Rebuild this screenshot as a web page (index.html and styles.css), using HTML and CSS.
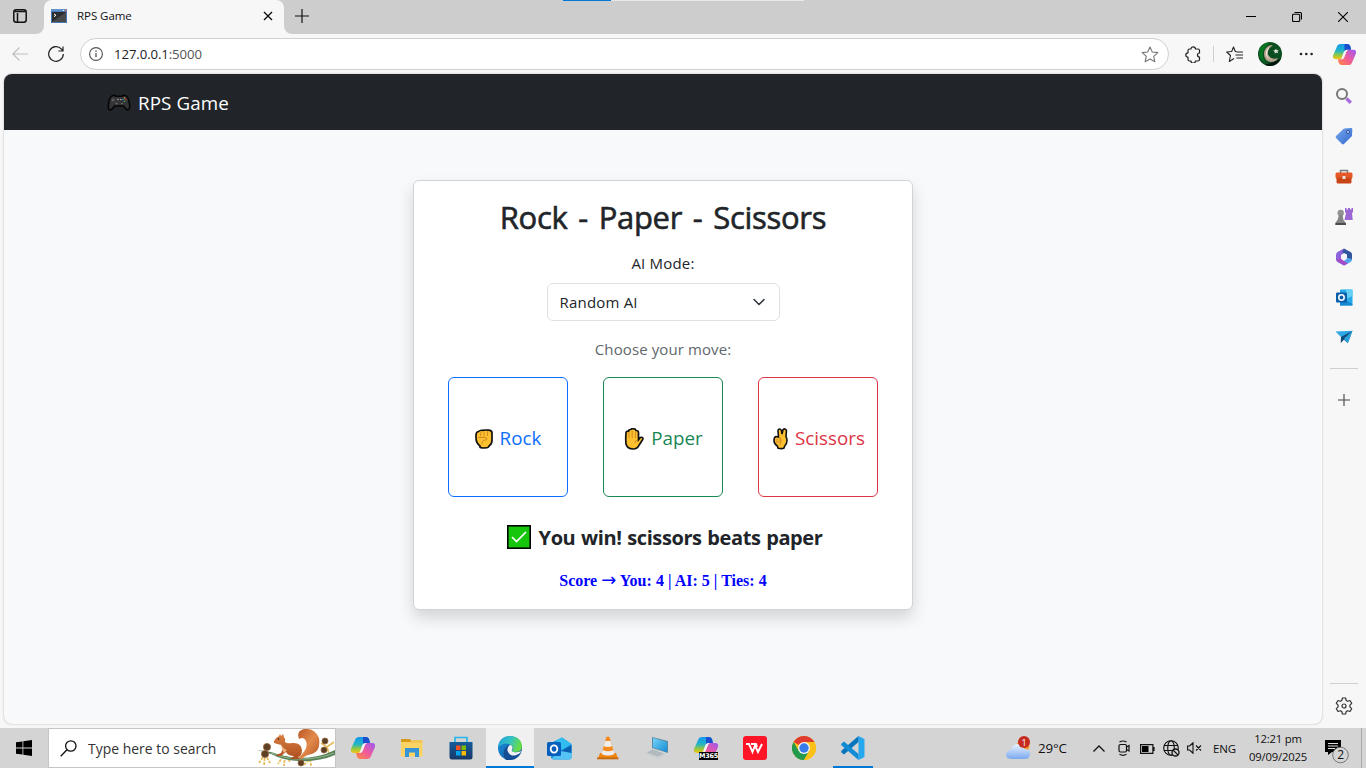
FILE: index.html
```html
<!DOCTYPE html>
<html lang="en">
<head>
<meta charset="utf-8">
<title>RPS Game</title>
<link rel="stylesheet" href="styles.css">
</head>
<body>
<svg width="0" height="0" class="defs" aria-hidden="true">
  <defs>
    <linearGradient id="cpA" x1="0" y1="0" x2="0" y2="1"><stop offset="0" stop-color="#1597ee"/><stop offset=".45" stop-color="#22b6c5"/><stop offset=".75" stop-color="#9cc93a"/><stop offset="1" stop-color="#f5c518"/></linearGradient>
    <linearGradient id="cpB" x1="1" y1="0" x2="0" y2="1"><stop offset="0" stop-color="#9b59f5"/><stop offset=".5" stop-color="#ef5a9d"/><stop offset="1" stop-color="#ff8a3d"/></linearGradient>
    <symbol id="copilot" viewBox="0 0 24 22">
      <path d="M4 3Q5 0 8 0h7q2 0 3 2l1 4h-4q-2 0-3 3l-1.500 4q-1 3-3 3H3q-4 0-3-4z" fill="url(#cpA)"/>
      <path d="M12 0h3q2 0 3 2l1 4h-4q-2 0-3 2z" fill="#1b4fd0"/>
      <path d="M20 19q-1 3-4 3H9q-2 0-3-2l-1-4h4q2 0 3-3l1.500-4q1-3 3-3H21q4 0 3 4z" fill="url(#cpB)"/>
      <path d="M15.500 6h-1Q12 6 11 9l-2.500 7q2.500 0 3.500-3l1.500-4q.8-2.500 2-3z" fill="#f6f3f6"/>
    </symbol>
    <linearGradient id="edgeA" x1="0" y1="0" x2="1" y2=".3"><stop offset="0" stop-color="#259fdd"/><stop offset=".55" stop-color="#34c3c1"/><stop offset="1" stop-color="#67dc48"/></linearGradient>
    <linearGradient id="edgeB" x1="0" y1="0" x2="1" y2="1"><stop offset="0" stop-color="#1496df"/><stop offset="1" stop-color="#174d94"/></linearGradient>
    <linearGradient id="fur" x1="0" y1="0" x2="0" y2="1"><stop offset="0" stop-color="#d98042"/><stop offset="1" stop-color="#ad4f20"/></linearGradient>
    <linearGradient id="tail" x1="0" y1="0" x2="1" y2="1"><stop offset="0" stop-color="#b95725"/><stop offset=".5" stop-color="#e28a4b"/><stop offset="1" stop-color="#b95725"/></linearGradient>
    <linearGradient id="cloud" x1="0" y1="0" x2="0" y2="1"><stop offset="0" stop-color="#e9f3ff"/><stop offset="1" stop-color="#7ba9ee"/></linearGradient>
    <linearGradient id="tag" x1="0" y1="0" x2="1" y2="1"><stop offset="0" stop-color="#76a9ef"/><stop offset="1" stop-color="#3468cb"/></linearGradient>
    <linearGradient id="screen" x1="0" y1="0" x2="1" y2="1"><stop offset="0" stop-color="#74d4f7"/><stop offset="1" stop-color="#168cd4"/></linearGradient>
    <linearGradient id="store" x1="0" y1="0" x2="0" y2="1"><stop offset="0" stop-color="#155b9b"/><stop offset="1" stop-color="#173966"/></linearGradient>
  </defs>
</svg>

<header class="tabstrip">
  <div class="tab-actions">
    <svg width="14" height="14" viewBox="0 0 14 14"><rect x=".8" y=".8" width="12.4" height="12.4" rx="2.5" fill="none" stroke="#111" stroke-width="1.5"/><path d="M1.500 2.500h11M4.500 4v9" fill="none" stroke="#111" stroke-width="1.5"/></svg>
  </div>
  <div class="tab">
    <svg class="favicon" width="16" height="14" viewBox="0 0 16 14"><rect width="16" height="14" fill="#4a79b8"/><rect x="1" y="3" width="14" height="10" fill="#2b2d2f"/><path d="M1 13 15 3v10z" fill="#48494b"/><path d="M0 1h16" stroke="#7fb0e4"/><path d="M12 1.500h1" stroke="#fff"/><path d="M14 1.500h1.400" stroke="#e35a4b" stroke-width="1.5"/><path d="m3 5 2 1.300L3 7.600" fill="none" stroke="#fff"/></svg>
    <span class="tab-title">RPS Game</span>
    <svg class="tab-close" width="10" height="10" viewBox="0 0 10 10"><path d="m1 1 8 8M9 1 1 9" stroke="#111" stroke-width="1.4"/></svg>
  </div>
  <div class="strip-rest">
    <svg class="new-tab" width="14" height="14" viewBox="0 0 14 14"><path d="M7 0v14M0 7h14" stroke="#111" stroke-width="1.2"/></svg>
    <div class="snap"><div class="snap-on"></div></div>
    <div class="window-buttons">
      <span><svg width="10" height="10" viewBox="0 0 10 10"><path d="M0 4.500h10" stroke="#000"/></svg></span>
      <span><svg width="10" height="10" viewBox="0 0 10 10" fill="none" stroke="#000" stroke-width="1.1"><rect x=".5" y="2.3" width="7.2" height="7.2" rx="1"/><path d="M2.500.5H8q1.500 0 1.500 1.500v5.500"/></svg></span>
      <span><svg width="10" height="10" viewBox="0 0 10 10"><path d="m0 0 10 10M10 0 0 10" stroke="#000" stroke-width="1.1"/></svg></span>
    </div>
  </div>
</header>

<div class="toolbar">
  <span class="nav-btn"><svg width="16" height="14" viewBox="0 0 16 14" fill="none" stroke="#bdbdbd" stroke-width="1.1"><path d="M16 7H.8M7.500.5.8 7l6.700 6.500"/></svg></span>
  <span class="nav-btn"><svg width="16" height="16" viewBox="0 0 16 16" fill="none" stroke="#222" stroke-width="1.2"><path d="M15.300 8A7.300 7.300 0 1 1 13.500 3.200L15 5M15 .5V5h-4.500"/></svg></span>
  <div class="address">
    <svg width="14" height="14" viewBox="0 0 14 14" fill="none" stroke="#555" stroke-width="1.1"><circle cx="7" cy="7" r="6.400"/><path d="M7 6v4.300M7 3.600V5" stroke-width="1.3"/></svg>
    <span class="url">127.0.0.1<span class="port">:5000</span></span>
    <svg class="star" width="18" height="17" viewBox="0 0 18 17" fill="none" stroke="#777" stroke-width="1.100" stroke-linejoin="round"><path d="m9 1 2.300 5 5.500.6-4.100 3.700 1.200 5.500L9 13l-4.900 2.800 1.200-5.500L1.200 6.600l5.500-.6z"/></svg>
  </div>
  <span class="tool puzzle"><svg width="16" height="17" viewBox="0 0 16 17" fill="none" stroke="#222" stroke-width="1.200" stroke-linejoin="round"><path d="M4.500 3H6a2.200 2.200 0 0 1 4.400 0H13q1.500 0 1.500 1.500V7a2 2 0 1 0 0 4v2.500q0 1.500-1.500 1.500h-2.600a2.200 2.200 0 0 1-4.400 0H4.500q-1.500 0-1.500-1.500v-2.300a2.200 2.200 0 0 1 0-4.400V4.500Q3 3 4.500 3z"/></svg></span>
  <span class="tool-line"></span>
  <span class="tool favs"><svg width="17" height="17" viewBox="0 0 17 17" fill="none" stroke="#222" stroke-width="1.100" stroke-linejoin="round"><path d="M11.500 6 9.300 5.500 7.500 1 5.700 5.500.7 6l3.800 3.500-1.200 6L8 12.500M9.500 9H17M10.500 12H17M10.500 6H17"/></svg></span>
  <span class="tool avatar"><svg width="24" height="24" viewBox="0 0 24 24"><circle cx="12" cy="12" r="12" fill="#0b4d20"/><path d="M2 6q5-6 10-5-5 3-7 9-1 6 3 11-6-3-7-9z" fill="#04751f"/><path d="M13 3q-7 2-7 9t7 8q5 0 7-4-5 2-8-1-3-2-2-6 1-4 5-5z" fill="#b6a28c"/><path d="M12 5q-5 3-4 8 2 5 7 5-5 0-6-6 0-4 3-7z" fill="#f2e9df"/><path d="m18 6.500.8 1.800 2.200-.6-1.500 1.500.8 2-2-.8-1.500 1.300v-2l-1.700-1 2.100-.6z" fill="#dbe3da"/><path d="M7 22.500q8-1 16-6Q19 24 12 24q-3 0-5-1.500z" fill="#05140c"/></svg></span>
  <span class="tool dots"><svg width="14" height="4" viewBox="0 0 14 4" fill="#222"><circle cx="2" cy="2" r="1.300"/><circle cx="7.300" cy="2" r="1.300"/><circle cx="12.600" cy="2" r="1.300"/></svg></span>
  <span class="tool cp"><svg width="23" height="21"><use href="#copilot"/></svg></span>
</div>

<div class="workspace">
  <main class="page">
    <nav class="navbar">
      <svg class="pad" width="24" height="18" viewBox="0 0 24 18"><path d="M6 1.500q2-.5 3 .7h6q1-1.200 3-.7 3 .5 4 6 1.500 6.500-.2 8-1.800 1-3.300-1l-2-2.500h-9l-2 2.500q-1.500 2-3.300 1-1.700-1.500-.2-8 1-5.500 4-6z" fill="#333335" stroke="#050505" stroke-width="1.600"/><path d="M4.500 6h3M6 4.500v3M8.500 9.500h2M9.500 8.500v2M14 9.500h2" stroke="#66686b"/><circle cx="11" cy="5.500" r=".8" fill="#aaa"/><circle cx="13.700" cy="5.500" r=".8" fill="#aaa"/><circle cx="17.500" cy="4" r=".8" fill="#d9a62d"/><circle cx="19" cy="5.600" r=".8" fill="#c23834"/><circle cx="17.500" cy="7.200" r=".8" fill="#3aa655"/><circle cx="16" cy="5.600" r=".8" fill="#2b7cd3"/></svg>
      <span class="brand">RPS Game</span>
    </nav>
    <section class="card">
      <h2 class="heading">Rock - Paper - Scissors</h2>
      <label class="mode-label">AI Mode:</label>
      <div class="select"><span class="select-text">Random AI</span>
        <svg width="12" height="8" viewBox="0 0 12 8" fill="none" stroke="#343a40" stroke-width="1.600" stroke-linecap="round" stroke-linejoin="round"><path d="m1 1.500 5 5 5-5"/></svg>
      </div>
      <p class="prompt">Choose your move:</p>
      <div class="moves">
        <button class="move rock"><svg width="18" height="20" viewBox="0 0 18 20"><path d="M3.500 2.500Q5 1 7 1.300q4-.5 6-.1 3.500-.2 4 2.300V11q0 4-2.500 5.500l-1 1.500q-1 1-4.500 1T5 18v-1Q1 14 1 9V6q0-3 2.500-3.500z" fill="#fdc12f" stroke="#111" stroke-width="1.700"/><path d="M5.700 3v4.500M9 2.500v5M12.500 2.500V7M3 8.500h7q2 0 2 1.500t-3 1q-2 1-2 4" fill="none" stroke="#cf8624" stroke-width=".9"/></svg><span>Rock</span></button>
        <button class="move paper"><svg width="20" height="22" viewBox="0 0 20 22"><path d="M2 5q0-2 2.500-1.800 0-1.700 2.200-1.700Q7.500.3 9.500 1q2-.3 2.500 1.500 2.500 0 2.500 2.300v7l1-1.300q1.500-2 3-.8.900.8-.1 2.300l-3.200 5Q13.500 21 9 21q-5.500 0-7-5-.5-5 0-11z" fill="#fdc12f" stroke="#111" stroke-width="1.700"/><path d="M5 4v6M8.200 3v7M11.500 4v6M14 12q-3 0-3 3" stroke="#cf8624" stroke-width=".9" fill="none"/></svg><span>Paper</span></button>
        <button class="move scissors"><svg width="15" height="22" viewBox="0 0 15 22"><path d="M5.500 9 5 3q0-2 1.600-2t1.900 2l.5 3 .9-4q.8-1.500 2.200-1 1.600.5 1.300 2.500L13 9q1 .8 1 3.500 0 3.500-2.300 5.500l-.7 2q-2 1.200-6 .2l-.5-2Q1 16 1 12.500 1 9 3 8.500z" fill="#fdc12f" stroke="#111" stroke-width="1.600"/><path d="M4 10.500v3M6.500 8.500 7 13M3 14h5q1-3-1-3.500M8 14q-1 1-1 3" fill="none" stroke="#cf8624" stroke-width=".9"/></svg><span>Scissors</span></button>
      </div>
      <div class="result"><svg width="24" height="24" viewBox="0 0 24 24"><rect x=".8" y=".8" width="22.400" height="22.400" fill="#16c60c" stroke="#050505" stroke-width="1.600"/><path d="m5 12 4.500 4.500L19 7" fill="none" stroke="#fff" stroke-width="1.700"/></svg><span>You win! scissors beats paper</span></div>
      <p class="score">Score <span class="arrow">→</span> You: 4 | AI: 5 | Ties: 4</p>
    </section>
  </main>

  <aside class="sidebar">
    <span class="side"><svg width="18" height="18" viewBox="0 0 18 18"><path d="m11.500 11.500 4.300 4.300" stroke="#a66fd8" stroke-width="3.400"/><circle cx="7" cy="7" r="5" fill="#f7f7f7" stroke="#777" stroke-width="2"/></svg></span>
    <span class="side"><svg width="18" height="18" viewBox="0 0 18 18"><path d="M9 1.500 16 1q1.300 0 1.300 1.300L17 9l-8 8q-1 .8-2 0L1 11q-.8-1 0-2z" fill="url(#tag)"/><circle cx="13" cy="5" r="1.500" fill="#dce8ff" stroke="#214b96"/></svg></span>
    <span class="side toolbox"><svg width="18" height="16" viewBox="0 0 18 16"><path d="M5.500 4V1.500h7V4" fill="none" stroke="#737b82" stroke-width="1.500"/><rect x=".5" y="3.500" width="17" height="6" rx="1.500" fill="#e35a27"/><path d="M1.500 8.500h15V13q0 1.500-1.500 1.500H3Q1.500 14.500 1.500 13z" fill="#c94416"/><rect x="7.500" y="7" width="3" height="3" fill="#e8e4df"/></svg></span>
    <span class="side"><svg width="18" height="19" viewBox="0 0 18 19"><path d="M10 1h1.500v1.500H13V1h2v1.500h1.500V1H18v4l-1 1 .7 7H9.500l1.500-7-1-1z" fill="#9a67d3"/><circle cx="5.700" cy="6" r="3.200" fill="#929292"/><path d="M4 8h3.500l1 5 2 2.500V18h-10v-2.500l2-2.500z" fill="#858585"/><path d="M.5 16h10.500v2H.5z" fill="#4d4d4d"/></svg></span>
    <span class="side"><svg width="18" height="18" viewBox="0 0 18 18"><path d="M9 .5 2.500 4Q1 5 1 7v5l5 2V7l5-3z" fill="#8c63da"/><path d="m9 .5 7 3.800q1 .7 1 2.200v6L12 10V6.500L7 4z" fill="#31589f"/><path d="m1 11.500 1.500 2.500L9 17.500l6.500-3.500q1.500-1 1.500-3l-5-1-3 3-3 1z" fill="#52a6ee"/><path d="m1 11.500 5-1 3 2.500 4 2.500-4 2-7-4z" fill="#a54cc7"/><circle cx="9" cy="9" r="3" fill="#f5f6fa"/></svg></span>
    <span class="side"><svg width="17" height="17" viewBox="0 0 17 17"><path d="M4 1.500Q4 .5 5 .5h10q1.500 0 1.500 1.500v13q0 1.500-1.500 1.500H4z" fill="#25a9e9"/><path d="M10 .5h6.500V7L10 10z" fill="#65cff6"/><path d="m4 9 12.500 6v1.500H4z" fill="#1588d4"/><rect y="3.500" width="11" height="10" rx="1" fill="#0b5eaa"/><circle cx="5.500" cy="8.500" r="2.700" fill="none" stroke="#fff" stroke-width="1.500"/></svg></span>
    <span class="side"><svg width="18" height="14" viewBox="0 0 18 14"><path d="m.5 1.500 17-.8L7 8z" fill="#30a7e5"/><path d="m7 8 10.500-7.300-4.700 12.500z" fill="#1675b6"/><path d="m6 7-.3 6 3.500-3.500L17 1z" fill="#104a78"/><path d="m9 8.500 8.500-7.800-4.700 12.500z" fill="#2b9fd8"/></svg></span>
    <span class="side-line first"></span>
    <span class="side"><svg width="12" height="12" viewBox="0 0 12 12"><path d="M6 0v12M0 6h12" stroke="#444" stroke-width="1.100"/></svg></span>
    <span class="side-line last"></span>
    <span class="side gear"><svg width="18" height="18" viewBox="0 0 18 18" fill="none" stroke="#333" stroke-width="1.200" stroke-linejoin="round"><path d="M7.400 1h3.200l.6 2.500 1.400.8L15 3.500l1.700 2.800-1.800 1.800v1.800l1.800 1.800-1.700 2.800-2.400-.8-1.400.8-.6 2.500H7.400l-.6-2.500-1.400-.8-2.400.8-1.700-2.800 1.800-1.800V8.100L1.300 6.300 3 3.500l2.400.8 1.400-.8z"/><circle cx="9" cy="9" r="2"/></svg></span>
  </aside>
</div>

<footer class="taskbar">
  <span class="start"><svg width="16" height="16" viewBox="0 0 16 16"><path d="m0 2.300 6.500-.9v6.200H0zM7.300 1.300 16 0v7.600H7.300zM0 8.400h6.500v6.200L0 13.700zM7.300 8.400H16V16l-8.700-1.300z"/></svg></span>
  <div class="search">
    <svg width="17" height="17" viewBox="0 0 17 17" fill="none" stroke="#111" stroke-width="1.300"><circle cx="10.800" cy="6" r="5.200"/><path d="M7 9.800.7 16.200"/></svg>
    <span class="search-text">Type here to search</span>
    <svg class="squirrel" width="78" height="38" viewBox="0 0 78 38">
      <path d="m8 25-6 9m6-9-1 12m1-12 5 9m13-7-5 8m7-8-1 10m2-10 4 6m19-2-5 5m6-6 1 7" stroke="#e6bc5c" stroke-width="1.800" stroke-dasharray="3 1" fill="none"/>
      <path d="M64 14l6 4 7-5m-7 5 2 7" stroke="#e6bc5c" stroke-width="1.600" fill="none"/>
      <path d="m0 21 14 2q14 5 28 6 20 0 36-8v5q-16 7-37 6-16-1-27-7z" fill="#57815b"/><path d="M14 24q15 6 29 6 20 0 34-6" fill="none" stroke="#8fb083" stroke-width="1.100"/>
      <g fill="#5d3f24" stroke="#94673f" stroke-width=".8"><circle cx="10" cy="18" r="3.600"/><circle cx="8" cy="25" r="3.600"/><circle cx="44" cy="34" r="3"/><circle cx="68" cy="12" r="3"/><circle cx="67" cy="21" r="3"/></g>
      <path d="M41 29Q52 20 49 12 47 7 42 10 39 2 47 0 58-1 62 9q2 13-7 16-7 1-10 5z" fill="url(#tail)"/>
      <path d="M17 12q1-3 5-5l1-2 1 2 2-2 1 3q2 2 1 5 2 2 7 1 9-1 10 7 0 6-4 7l2 2H33l4-3q-6 0-8-4l-5 4h-4l-1-1 5-2 2-5-2-3-7-2z" fill="url(#fur)"/><path d="M24 15q2 5 6 6l-3 3q-3-4-3-9z" fill="#efb27f"/><circle cx="21.500" cy="10" r=".8" fill="#222"/>
    </svg>
  </div>
  <div class="apps">
    <span class="app"><svg width="24" height="22"><use href="#copilot"/></svg></span>
    <span class="app"><svg width="22" height="20" viewBox="0 0 22 20"><path d="M0 1.500Q0 1 .5 1H9l1.500 3H0z" fill="#d69a17"/><path d="M0 4h21.500v14.500H0z" fill="#fbd364"/><path d="M10 2h11.500v3H10z" fill="#f3c653"/><path d="M4 10h14v9h-4v-4.500H8V19H4z" fill="#3794d6"/></svg></span>
    <span class="app"><svg width="24" height="24" viewBox="0 0 24 24"><path d="M6 7V1.500h12V7" fill="none" stroke="#26b5ec" stroke-width="1.700"/><path d="M.5 6h23v15q0 2.500-2.500 2.500H3Q.5 23.500.5 21z" fill="url(#store)"/><path d="M7 9.500h4.500V14H7z" fill="#f25022"/><path d="M12.500 9.500H17V14h-4.500z" fill="#7fba00"/><path d="M7 15h4.500v4.500H7z" fill="#00a4ef"/><path d="M12.500 15H17v4.500h-4.500z" fill="#ffb900"/></svg></span>
    <span class="app active"><svg width="24" height="24" viewBox="0 0 24 24"><circle cx="12" cy="12" r="12" fill="url(#edgeB)"/><path d="M.2 11Q1 1 11 0q12 0 13 10 0 6-7 6-4 0-3-2 2-3-1-5Q7 5 .2 11z" fill="url(#edgeA)"/><path d="M8 24Q3 17 8 11q3-3 6-1 2 2 0 4.500-.5 2.500 4 2.500 3 0 5-1.500-4 8-11 8.500-2 .3-4 0z" fill="#164e94"/><path d="M11.500 9.300q-3 2.700-1.800 6 2 4.700 7.300 4.200 3.500-.5 6-3.500 1-1.300-1-.5-3 1.300-6.500.5-2.500-.7-1.500-2 1.500-3-.5-4.500-1-.7-2-.2z" fill="#f0f2f2"/></svg></span>
    <span class="app"><svg width="25" height="23" viewBox="0 0 25 23"><path d="M4 6 15 .5 24.500 7v13q0 2.500-2.500 2.500H7Q4 22 4 20z" fill="#1491df"/><path d="m9 3.500 6-3L24.500 7 15 13z" fill="#32bdf0"/><path d="M24.500 8 9 18l-4 3q1 1.500 3 1.500h14q2.500 0 2.500-2.500z" fill="#54c4f4"/><path d="m14 14 10.500-6v8z" fill="#0a60b3"/><rect y="5" width="14" height="14" rx="1.500" fill="#075fbd"/><ellipse cx="7" cy="12" rx="3.300" ry="3.700" fill="none" stroke="#fff" stroke-width="1.800"/></svg></span>
    <span class="app"><svg width="22" height="24" viewBox="0 0 22 24"><path d="M3 17h16l2 5.500H1z" fill="#ee8510"/><path d="M9.300 1q1.700-1 3.200 0l5 17q-6.500 4-13 0z" fill="#f68a1e"/><path d="M8.300 5h5.200l1.600 5q-4.200 2-8.400 0zM5.700 14q5.300 2.500 10.600 0l1.200 4q-6.500 3-13 0z" fill="#eee"/><path d="M0 21.500h21.500v1.800H0z" fill="#c5670c"/></svg></span>
    <span class="app"><svg width="24" height="22" viewBox="0 0 24 22"><path d="m7 0 16 4v12L7 11z" fill="#5b8aa6"/><path d="m8 1 14 4v10L8 10.500z" fill="url(#screen)"/><path d="m7 12 14 5-8 4.500L0 16z" fill="#c7cdd0"/><path d="m5 14 11 4m-13-3 11 4M7 13l11 4" stroke="#9aa5ab" stroke-width=".8"/></svg></span>
    <span class="app"><span class="m365"><svg width="24" height="22"><use href="#copilot"/></svg><b>M365</b></span></span>
    <span class="app"><svg width="24" height="24" viewBox="0 0 24 24"><rect width="24" height="24" rx="3" fill="#ff1525"/><path d="M3 8h3l3.500 8L12 9.500l3 6.500 4-8M8 8h5l1 3" fill="none" stroke="#fff" stroke-width="1.900"/></svg></span>
    <span class="app"><svg width="24" height="24" viewBox="0 0 24 24"><circle cx="12" cy="12" r="12" fill="#fbc116"/><path d="M12 12 1.600 6A12 12 0 0 1 22.400 6H12z" fill="#df3b30"/><path d="M1.600 6A12 12 0 0 0 12 24l5.200-9-10.400 0z" fill="#23994e"/><path d="M22.400 6H12l5.200 9L12 24A12 12 0 0 0 22.400 6z" fill="#fbc116"/><circle cx="12" cy="12" r="6" fill="#f4f6f6"/><circle cx="12" cy="12" r="4.700" fill="#367be8"/></svg></span>
    <span class="app running"><svg width="24" height="24" viewBox="0 0 24 24"><path d="m17.500 0 6 3v18l-6 3z" fill="#26a7ee"/><path d="M17.500 0v6L3 18.500l-2.500-2q-.8-1 .2-2z" fill="#0874bd"/><path d="M17.500 24v-6L3 5.500l-2.500 2q-.8 1 .2 2z" fill="#118bd4"/></svg></span>
  </div>
  <div class="tray">
    <svg class="weather" width="26" height="24" viewBox="0 0 26 24"><circle cx="17" cy="10" r="6.500" fill="#f59b2c"/><path d="M5 23q-5-.5-5-4.500Q.5 14 5 14q1-6 7-6 5 0 6.500 5 5.500 0 5.500 5t-5 5z" fill="url(#cloud)"/><circle cx="18" cy="6" r="6" fill="#c62b20"/><text x="15.500" y="9.500" class="badge-num">1</text></svg>
    <span class="temp">29°C</span>
    <svg class="t-chev" width="12" height="7" viewBox="0 0 12 7" fill="none" stroke="#111" stroke-width="1.300"><path d="m.5 6.500 5.500-5.500 5.500 5.500"/></svg>
    <svg class="t-cam" width="12" height="16" viewBox="0 0 12 16" fill="none" stroke="#111" stroke-width="1.200"><rect x="1" y="4.500" width="7.500" height="7.500" rx="1.500"/><path d="m8.500 7 2.500-1.500v5.500L8.500 9.500M1.500 2Q5 0 8.500 2M1.500 14.300q3.500 2 7 0"/></svg>
    <svg class="t-bat" width="15" height="10" viewBox="0 0 15 10"><path d="M.6.600h12.300v8.800H.6zM14 3v4" fill="none" stroke="#111" stroke-width="1.200"/><path d="M2 2h6.500v6H2z"/></svg>
    <svg class="t-globe" width="17" height="17" viewBox="0 0 17 17" fill="none" stroke="#111" stroke-width="1.100"><circle cx="8" cy="8" r="7.300"/><ellipse cx="8" cy="8" rx="3.300" ry="7.300"/><path d="M1 5.500h14M1 10.500h14"/><circle cx="12.500" cy="12.500" r="3.500" fill="#d3d3d3" stroke-width="1.300"/><path d="m10 10 5 5"/></svg>
    <svg class="t-vol" width="15" height="12" viewBox="0 0 15 12" fill="none" stroke="#111" stroke-width="1.100"><path d="M.6 4h2L6 .8v10.400L2.600 8h-2zM9 3.500l5 5m0-5-5 5"/></svg>
    <span class="lang">ENG</span>
    <div class="clock"><span>12:21 pm</span><span class="date">09/09/2025</span></div>
    <svg class="notify" width="26" height="26" viewBox="0 0 26 26"><path d="M0 1h16v12H7l-4 3v-3H0z"/><path d="M3 4.500h10M3 7h10M3 9.500h7" stroke="#ddd"/><circle cx="15.500" cy="16" r="7.800" fill="#d4d4d4" stroke="#777"/><text x="12.300" y="20.300" class="notify-num">2</text></svg>
    <span class="desktop-line"></span>
  </div>
</footer>
</body>
</html>
```
FILE: styles.css
```css
* { box-sizing: border-box; }
body { margin: 0; width: 1366px; height: 768px; overflow: hidden; display: flex; flex-direction: column; background: #f7f7f7; color: #212529; font-family: "Open Sans", "Noto Sans", sans-serif; }
svg { display: block; flex: none; }
.defs { position: absolute; }
span { white-space: nowrap; }

.tabstrip { height: 34px; background: #f7f7f7; display: flex; flex: none; }
.tab-actions { width: 44px; padding: 9px 0 0 13px; background: #cdcdcd; border-bottom-right-radius: 8px; }
.tab { width: 240px; background: linear-gradient(#cdcdcd 50%, #f7f7f7 50%); display: flex; align-items: center; padding: 0 11px 2px 7px; position: relative; z-index: 0; }
.tab::before { content: ""; position: absolute; inset: 0; z-index: -1; background: #f7f7f7; border-radius: 8px 8px 0 0; }
.tab-title { margin: -1px 0 0 10px; font-size: 11.500px; letter-spacing: -.05px; color: #111; flex: 1; }
.strip-rest { flex: 1; display: flex; background: #cdcdcd; border-bottom-left-radius: 8px; }
.new-tab { margin: 9px 0 0 11px; }
.snap { width: 241px; height: 1px; background: #e8e8e8; margin-left: 254px; }
.snap-on { width: 48px; height: 1px; background: #0078d7; }
.window-buttons { display: flex; margin-left: auto; }
.window-buttons span { width: 46px; height: 34px; display: flex; align-items: center; justify-content: center; }

.toolbar { height: 40px; flex: none; display: flex; align-items: center; padding-left: 2px; }
.nav-btn { width: 36px; display: flex; justify-content: center; }
.address { width: 1089px; height: 32px; margin-left: 6px; border: 1px solid #d0d0d0; border-radius: 16px; background: #fff; display: flex; align-items: center; padding: 0 9px 0 8px; }
.url { margin-left: 11px; font-size: 13.200px; letter-spacing: -.1px; color: #222; flex: 1; }
.port { color: #555; }
.tool { display: flex; justify-content: center; }
.puzzle { width: 48px; }
.tool-line { width: 1px; height: 16px; background: #cfcfcf; margin-left: -4px; }
.favs { width: 40px; }
.avatar { width: 31px; }
.dots { width: 41px; }
.cp { width: 36px; }

.workspace { height: 654px; flex: none; display: flex; padding-left: 4px; }
.page { width: 1318px; height: 650px; background: #f8f9fa; border-radius: 8px; overflow: hidden; box-shadow: 0 0 2px #aaa; }
.navbar { height: 56px; background: #212529; display: flex; align-items: center; padding: 2px 0 0 103px; color: #fff; }
.brand { margin-left: 7px; font-size: 18.800px; letter-spacing: .1px; line-height: 25px; }
.card { width: 500px; height: 430px; margin: 50px 0 0 409px; background: #fff; border: 1px solid #d1d3d4; border-radius: 6px; box-shadow: 0 8px 16px rgba(0,0,0,.15); padding: 16px 34px 0; display: flex; flex-direction: column; align-items: center; }
.card > * { flex: none; }
.heading { margin: 0; height: 38px; line-height: 40px; font-size: 31px; font-weight: 400; letter-spacing: -.3px; word-spacing: 3px; -webkit-text-stroke: .6px #212529; white-space: nowrap; }
.mode-label { margin-top: 16px; height: 24px; line-height: 25px; font-size: 15px; letter-spacing: .2px; }
.select { margin-top: 8px; width: 233px; height: 38px; border: 1px solid #dee2e6; border-radius: 6px; display: flex; align-items: center; justify-content: space-between; padding: 0 14px 0 12px; font-size: 15px; letter-spacing: .2px; }
.prompt { margin: 16px 0 0; height: 24px; line-height: 25px; font-size: 15px; letter-spacing: .1px; color: #62676c; }
.moves { width: 430px; margin-top: 16px; display: flex; justify-content: space-between; }
.move { width: 120px; height: 120px; background: #fff; border: 1px solid; border-radius: 6px; padding: 1px 0 0; display: flex; align-items: center; justify-content: center; gap: 7px; font: 18.800px "Open Sans", "Noto Sans", sans-serif; }
.move svg { margin-top: 2px; }
.rock { color: #0d6efd; }
.paper { color: #198754; padding-left: 1px; }
.scissors { color: #dc3545; padding-left: 2px; }
.result { margin: 24px 0 0 3px; height: 32px; display: flex; align-items: center; gap: 8px; font-size: 20px; letter-spacing: -.42px; word-spacing: 1px; font-weight: 700; }
.score { margin: 16px 0 0; height: 24px; font: 700 16px/24px "Liberation Serif", serif; color: #00f; white-space: nowrap; letter-spacing: .02px; }
.arrow { font: 400 18px/20px "DejaVu Sans", sans-serif; }

.sidebar { width: 44px; display: flex; flex-direction: column; align-items: center; padding-top: 2px; }
.side { height: 40.200px; display: flex; align-items: center; justify-content: center; flex: none; }
.toolbox { padding-top: 2px; }
.side-line { width: 28px; height: 1px; background: #cfcfcf; flex: none; }
.first { margin: 11px 0; }
.last { margin-top: auto; margin-bottom: 2px; }
.gear { margin-bottom: 2px; }

.taskbar { height: 40px; flex: none; background: #d4d4d4; display: flex; color: #111; }
.start { width: 48px; display: flex; align-items: center; justify-content: center; }
.search { width: 288px; height: 40px; background: #fff; border: 1px solid #c5c5c5; display: flex; align-items: center; padding-left: 11px; }
.search-text { margin: 1px 0 0 11px; font-size: 13.900px; letter-spacing: .03px; color: #333; flex: 1; }
.apps { margin-left: 3px; display: flex; gap: 1px; }
.app { width: 48px; display: flex; align-items: center; justify-content: center; }
.active { background: #f0f0f0; border-bottom: 2px solid #0078d7; padding-top: 2px; }
.running { background: linear-gradient(#0078d7, #0078d7) center bottom / 40px 2px no-repeat; }
.m365 { position: relative; }
.m365 b { position: absolute; left: 5px; top: 15px; width: 19px; height: 8px; background: #000; color: #fff; font: 700 6.500px/8px "DejaVu Sans", sans-serif; text-align: center; letter-spacing: -.3px; }
.tray { margin-left: auto; display: flex; align-items: center; }
.badge-num { font: 9px "Open Sans", sans-serif; fill: #fff; }
.temp { margin-left: 6px; width: 30px; font-size: 13.300px; letter-spacing: -.1px; }
.t-chev { margin-left: 25px; }
.t-cam { margin-left: 13px; }
.t-bat { margin-left: 10px; margin-top: 1px; }
.t-globe { margin-left: 8px; }
.t-vol { margin-left: 7px; }
.lang { margin-left: 11px; width: 24px; font-size: 11.500px; letter-spacing: -.2px; }
.clock { margin-left: 11px; width: 60px; display: flex; flex-direction: column; align-items: center; font-size: 11.300px; line-height: 18px; letter-spacing: -.2px; }
.notify { margin: 8px 0 0 17px; }
.notify-num { font: 12px "Open Sans", sans-serif; fill: #111; }
.desktop-line { margin-left: 10px; width: 1px; height: 40px; background: #aaa; margin-right: 4px; }
```
